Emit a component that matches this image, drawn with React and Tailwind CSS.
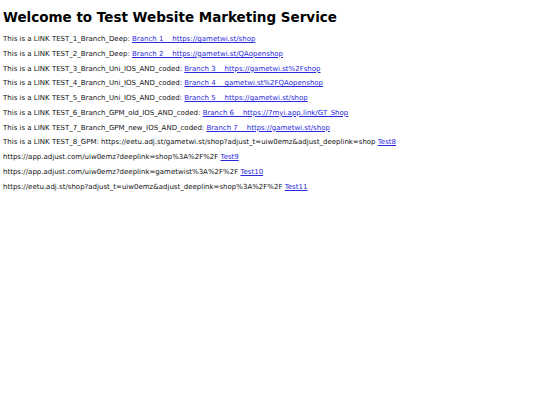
const links = [
  { label: 'This is a LINK TEST_1_Branch_Deep: ', text: 'Branch 1\u00a0\u00a0\u00a0\u00a0https://gametwi.st/shop' },
  { label: 'This is a LINK TEST_2_Branch_Deep: ', text: 'Branch 2\u00a0\u00a0\u00a0\u00a0https://gametwi.st/QAopenshop' },
  { label: 'This is a LINK TEST_3_Branch_Uni_IOS_AND_coded: ', text: 'Branch 3\u00a0\u00a0\u00a0\u00a0https://gametwi.st%2Fshop' },
  { label: 'This is a LINK TEST_4_Branch_Uni_IOS_AND_coded: ', text: 'Branch 4\u00a0\u00a0\u00a0\u00a0gametwi.st%2FQAopenshop' },
  { label: 'This is a LINK TEST_5_Branch_Uni_IOS_AND_coded: ', text: 'Branch 5\u00a0\u00a0\u00a0\u00a0https://gametwi.st/shop' },
  { label: 'This is a LINK TEST_6_Branch_GPM_old_IOS_AND_coded: ', text: 'Branch 6\u00a0\u00a0\u00a0\u00a0https://7myi.app.link/GT_Shop' },
  { label: 'This is a LINK TEST_7_Branch_GPM_new_IOS_AND_coded: ', text: 'Branch 7\u00a0\u00a0\u00a0\u00a0https://gametwi.st/shop' },
  { label: 'This is a LINK TEST_8_GPM: https://eetu.adj.st/gametwi.st/shop?adjust_t=uiw0emz&adjust_deeplink=shop ', text: 'Test8' },
  { label: 'https://app.adjust.com/uiw0emz?deeplink=shop%3A%2F%2F ', text: 'Test9' },
  { label: 'https://app.adjust.com/uiw0emz?deeplink=gametwist%3A%2F%2F ', text: 'Test10' },
  { label: 'https://eetu.adj.st/shop?adjust_t=uiw0emz&adjust_deeplink=shop%3A%2F%2F ', text: 'Test11' },
]

export default function App() {
  return (
    <div className="w-[540px] h-[405px] bg-white px-[3px] pt-[10px] text-black font-['DejaVu_Sans',sans-serif]">
      <h1 className="text-[13.5px] font-bold leading-[15px] mb-[7px] whitespace-nowrap">
        Welcome to Test Website Marketing Service
      </h1>
      {links.map((l) => (
        <p key={l.text} className="text-[7px] leading-[14.77px] whitespace-nowrap text-[#111]">
          {l.label}
          <a href="#" className="text-[#2929dd] underline">{l.text}</a>
        </p>
      ))}
    </div>
  )
}
